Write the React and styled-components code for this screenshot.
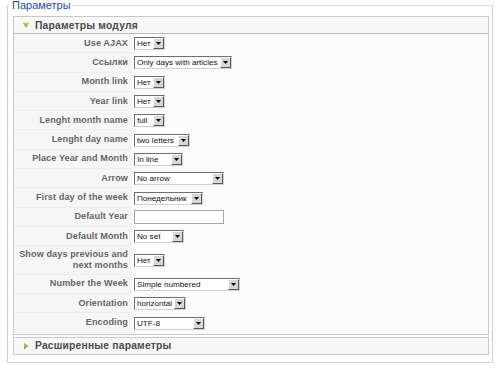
import React from 'react'
import styled, { createGlobalStyle } from 'styled-components';

const GlobalStyle = createGlobalStyle`
  body {
    margin: 0;
    background: #ffffff;
    font-family: "Liberation Sans", Arial, sans-serif;
  }
`;

const params = [
  { label: 'Use AJAX', value: 'Нет', w: 31 },
  { label: 'Ссылки', value: 'Only days with articles', w: 98 },
  { label: 'Month link', value: 'Нет', w: 31 },
  { label: 'Year link', value: 'Нет', w: 31 },
  { label: 'Lenght month name', value: 'full', w: 31 },
  { label: 'Lenght day name', value: 'two letters', w: 56 },
  { label: 'Place Year and Month', value: 'In line', w: 49 },
  { label: 'Arrow', value: 'No arrow', w: 90 },
  { label: 'First day of the week', value: 'Понедельник', w: 69 },
  { label: 'Default Year', input: true, w: 90 },
  { label: 'Default Month', value: 'No set', w: 50 },
  { label: ['Show days previous and', 'next months'], value: 'Нет', w: 31 },
  { label: 'Number the Week', value: 'Simple numbered', w: 106 },
  { label: 'Orientation', value: 'horizontal', w: 52 },
  { label: 'Encoding', value: 'UTF-8', w: 71 },
];

const Triangle = ({ open }) => (
  <svg width="8" height="8" viewBox="0 0 8 8">
    <defs>
      <linearGradient id={open ? 'tg-open' : 'tg-closed'} x1="0" y1="0" x2="0" y2="1">
        <stop offset="0" stopColor="#b6e07a" />
        <stop offset="1" stopColor="#5fa82a" />
      </linearGradient>
    </defs>
    {open
      ? <polygon points="0.5,1.5 7.5,1.5 4,6.5" fill={`url(#tg-open)`} />
      : <polygon points="2,0.5 6.5,4 2,7.5" fill={`url(#tg-closed)`} />}
  </svg>
);

const Select = ({ value, w }) => (
  <SelectBox $w={w}>
    <SelectText>{value}</SelectText>
    <ArrowButton>
      <svg width="5" height="3" viewBox="0 0 5 3">
        <polygon points="0,0 5,0 2.5,3" fill="#000" />
      </svg>
    </ArrowButton>
  </SelectBox>
);

const App = () => {
  return (
    <>
      <GlobalStyle />
      <Fieldset>
        <Legend>Параметры</Legend>
        <Panel>
          <PanelTitle $open>
            <Triangle open />
            <span>Параметры модуля</span>
          </PanelTitle>
          <ParamList>
            {params.map((p, i) => (
              <ParamRow key={i}>
                <ParamKey>
                  {Array.isArray(p.label)
                    ? p.label.map((l, j) => <div key={j}>{l}</div>)
                    : p.label}
                </ParamKey>
                <ParamValue>
                  {p.input ? <TextInput $w={p.w} /> : <Select value={p.value} w={p.w} />}
                </ParamValue>
              </ParamRow>
            ))}
          </ParamList>
        </Panel>
        <Panel>
          <PanelTitle>
            <Triangle />
            <span>Расширенные параметры</span>
          </PanelTitle>
        </Panel>
      </Fieldset>
    </>
  )
}

const Fieldset = styled.fieldset`
  margin: 0 4px 0 7px;
  padding: 5px 3px 7px 5px;
  border: 1px solid #cfcfcf;
  border-top-color: #dedede;
  min-width: 0;
`;

const Legend = styled.legend`
  margin-left: -3px;
  padding: 0 2px;
  font-size: 11px;
  line-height: 11px;
  color: #1d4f98;
`;

const Panel = styled.div`
  border: 1px solid #c9c9c9;
  background: #fbfbfb;
  & + & {
    margin-top: 2px;
  }
`;

const PanelTitle = styled.div`
  display: flex;
  align-items: center;
  gap: 5px;
  height: 16px;
  padding-left: 8px;
  border-bottom: ${p => (p.$open ? '1px solid #bdbdbd' : 'none')};
  background: #f8f8f8;
  font-size: 10.3px;
  font-weight: bold;
  letter-spacing: 0.2px;
  color: #4a4a4a;
`;

const ParamList = styled.div`
  display: flex;
  flex-direction: column;
  padding-bottom: 1px;
`;

const ParamRow = styled.div`
  display: grid;
  grid-template-columns: 118px 1fr;
  min-height: 19.3px;
`;

const ParamKey = styled.div`
  display: flex;
  flex-direction: column;
  justify-content: center;
  align-items: flex-end;
  padding: 2.75px 4px 2.75px 0;
  background: #f6f6f6;
  border-bottom: 1px solid #efefef;
  font-size: 9.1px;
  line-height: 11px;
  font-weight: bold;
  letter-spacing: 0.1px;
  color: #666666;
  text-align: right;
  white-space: nowrap;
`;

const ParamValue = styled.div`
  display: flex;
  align-items: center;
  padding-left: 2px;
`;

const SelectBox = styled.div`
  display: inline-flex;
  align-items: stretch;
  box-sizing: border-box;
  width: ${p => p.$w}px;
  height: 13px;
  border: 1px solid;
  border-color: #6f6f6f #d0d0d0 #d0d0d0 #6f6f6f;
  background: #ffffff;
`;

const SelectText = styled.span`
  flex: 1;
  min-width: 0;
  padding-left: 2px;
  font-size: 8.1px;
  line-height: 11px;
  color: #111111;
  white-space: nowrap;
  overflow: hidden;
`;

const ArrowButton = styled.span`
  display: flex;
  flex-shrink: 0;
  align-items: center;
  justify-content: center;
  width: 11px;
  box-sizing: border-box;
  background: #d9d6cf;
  border: 1px solid;
  border-color: #ffffff #5a5a5a #5a5a5a #ffffff;
`;

const TextInput = styled.div`
  box-sizing: border-box;
  width: ${p => p.$w}px;
  height: 14px;
  border: 1px solid #a9a9a9;
  background: #ffffff;
`;

export default App
